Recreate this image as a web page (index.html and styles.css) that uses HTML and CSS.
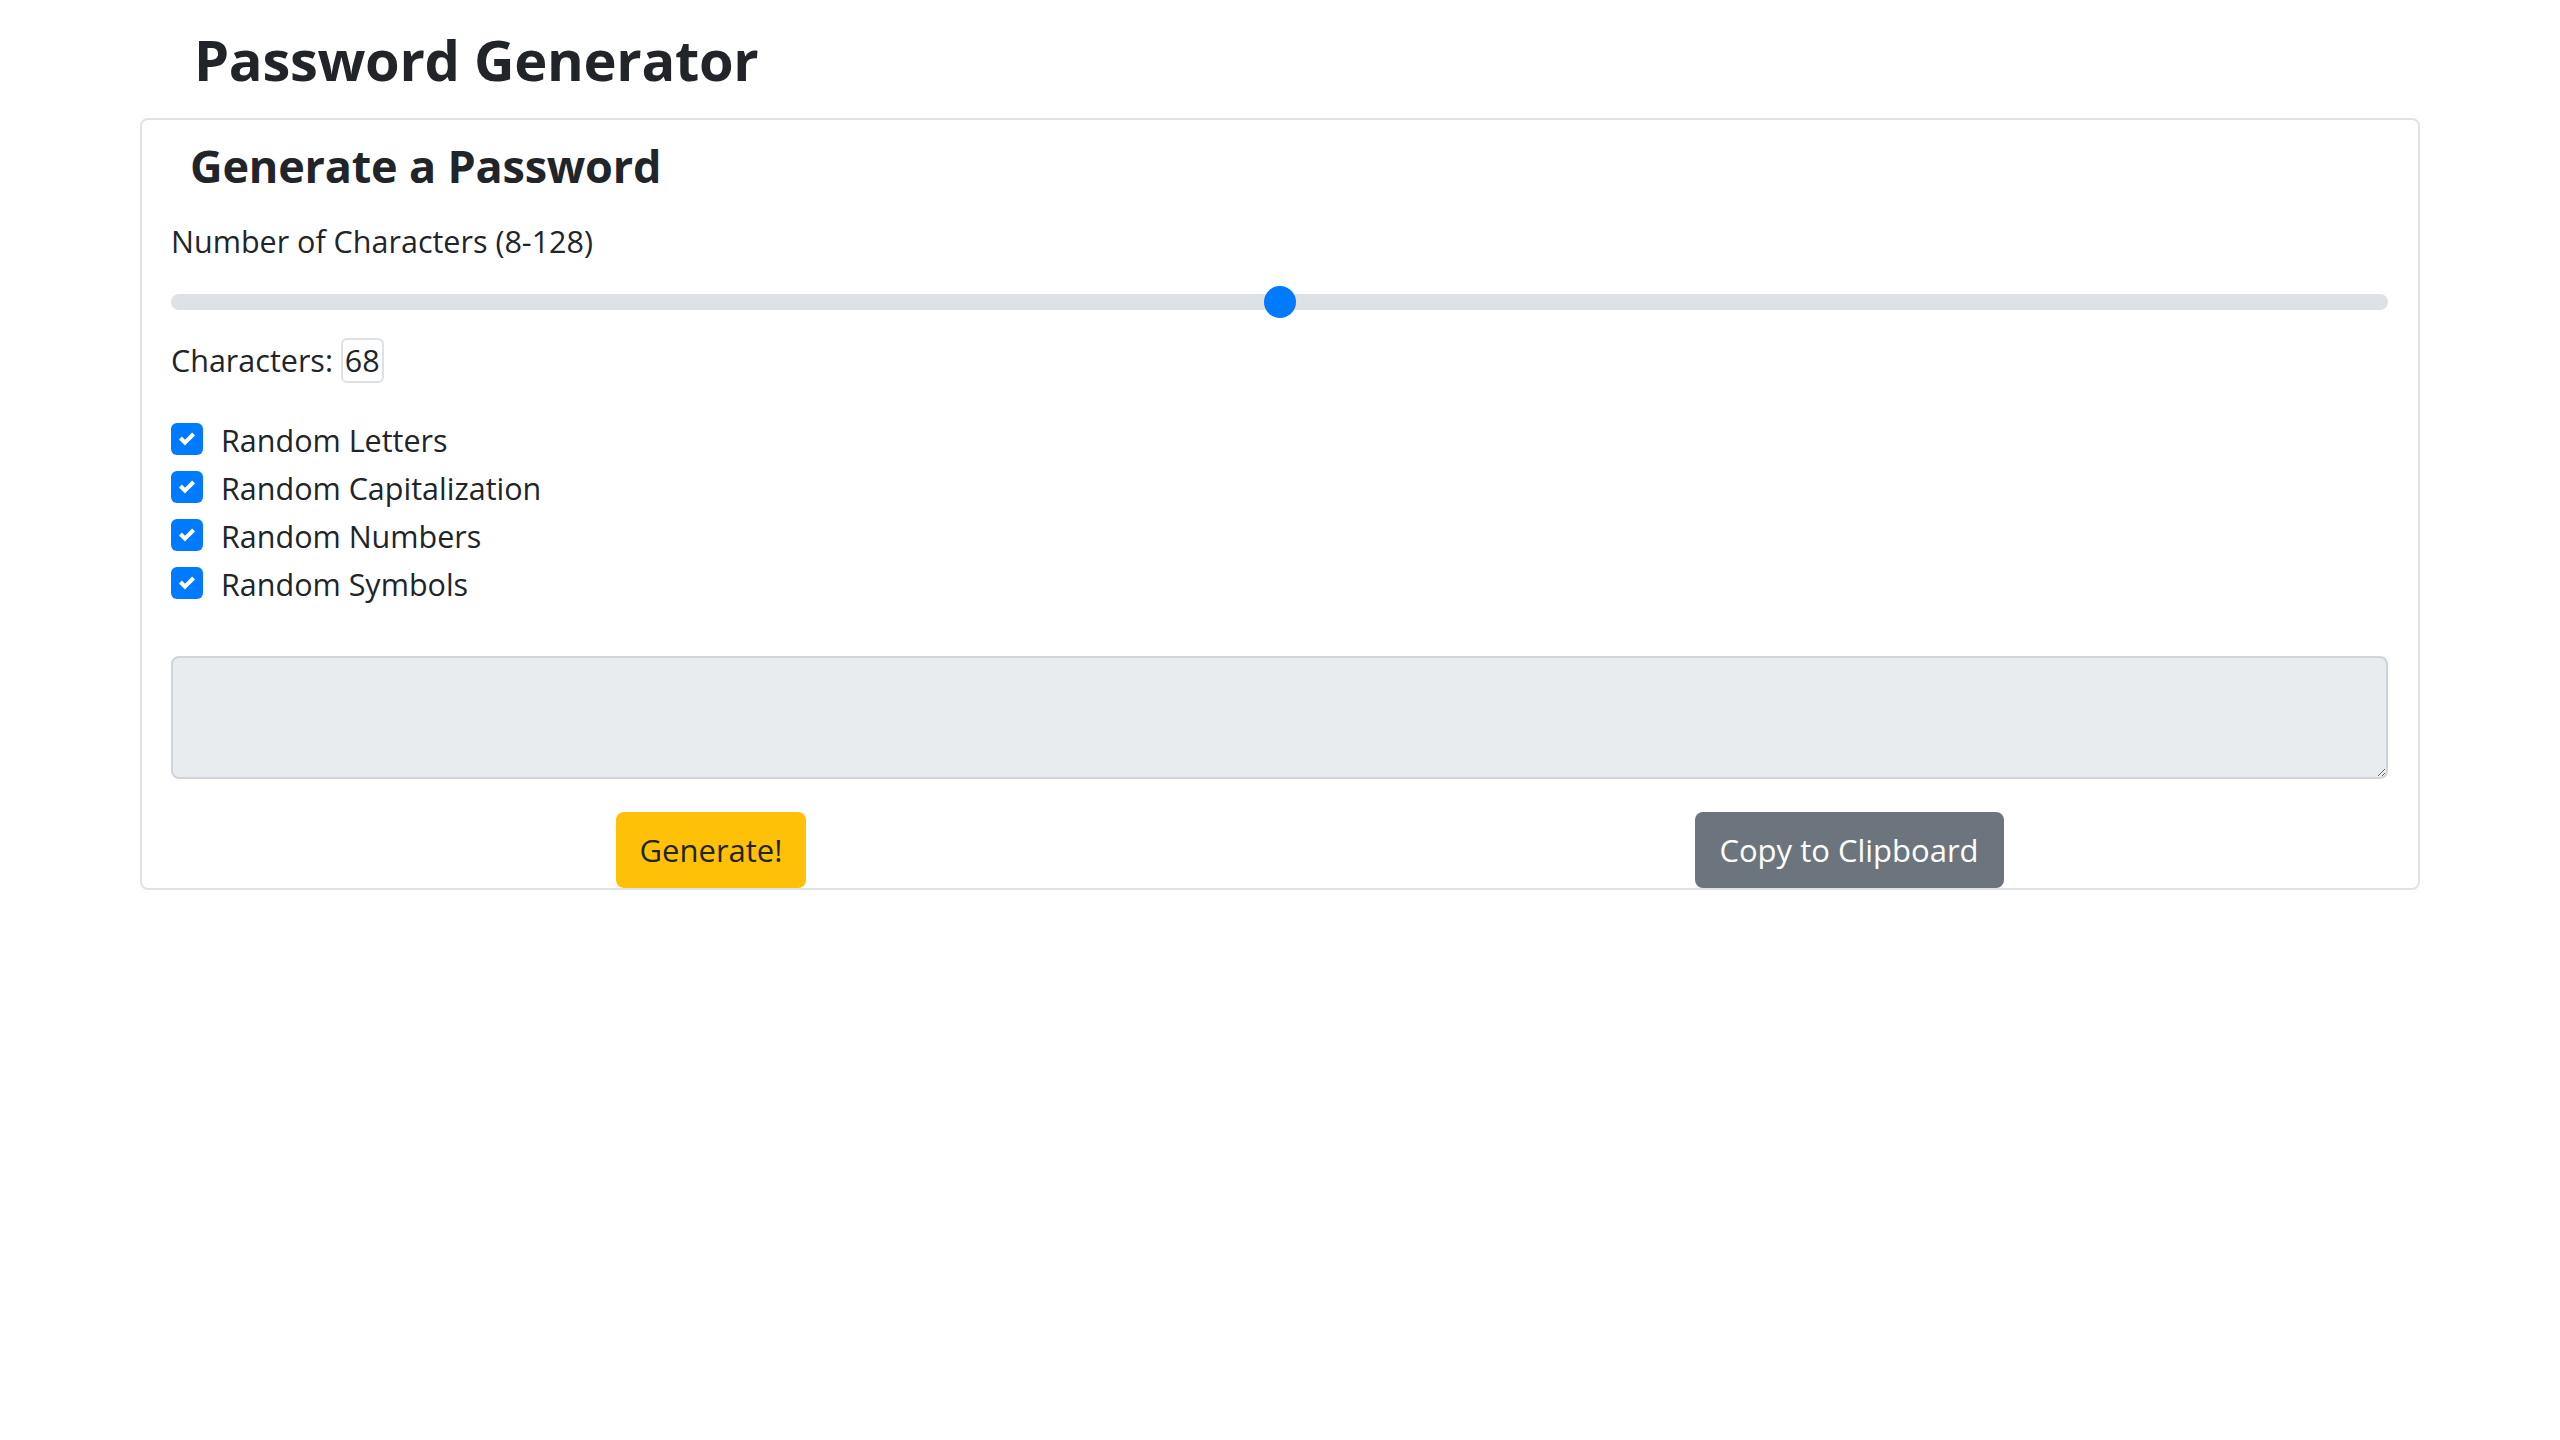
FILE: index.html
```html
<!DOCTYPE html>
<html lang="en">
<head>
<meta charset="utf-8">
<title>Password Generator</title>
<link rel="stylesheet" href="styles.css">
</head>
<body>
<div class="container">
  <h1 class="page-title">Password Generator</h1>
  <div class="card">
    <h2 class="card-title">Generate a Password</h2>
    <div class="card-body">
      <label class="field-label" for="length">Number of Characters (8-128)</label>
      <input class="range" type="range" id="length" min="8" max="128" value="68">
      <p class="count">Characters:&nbsp;<span class="badge">68</span></p>
      <ul class="options">
        <li class="option"><span class="check"><svg viewBox="0 0 8 8" width="16" height="16"><path fill="#fff" d="M6.564.75l-3.59 3.612-1.538-1.55L0 4.26 2.974 7.25 8 2.193z"/></svg></span>Random Letters</li>
        <li class="option"><span class="check"><svg viewBox="0 0 8 8" width="16" height="16"><path fill="#fff" d="M6.564.75l-3.59 3.612-1.538-1.55L0 4.26 2.974 7.25 8 2.193z"/></svg></span>Random Capitalization</li>
        <li class="option"><span class="check"><svg viewBox="0 0 8 8" width="16" height="16"><path fill="#fff" d="M6.564.75l-3.59 3.612-1.538-1.55L0 4.26 2.974 7.25 8 2.193z"/></svg></span>Random Numbers</li>
        <li class="option"><span class="check"><svg viewBox="0 0 8 8" width="16" height="16"><path fill="#fff" d="M6.564.75l-3.59 3.612-1.538-1.55L0 4.26 2.974 7.25 8 2.193z"/></svg></span>Random Symbols</li>
      </ul>
      <textarea class="output" readonly></textarea>
      <div class="actions">
        <div class="action-col"><button class="btn btn-warning" type="button">Generate!</button></div>
        <div class="action-col"><button class="btn btn-secondary" type="button">Copy to Clipboard</button></div>
      </div>
    </div>
  </div>
</div>
</body>
</html>
```
FILE: styles.css
```css
* { box-sizing: border-box; }

body {
  margin: 0;
  background: #fff;
  color: #212529;
  font-family: "Open Sans", "Noto Sans", sans-serif;
  font-size: 30.5px;
}

.container {
  width: 2280px;
  margin: 0 auto;
}

.page-title {
  margin: 0;
  padding-left: 54px;
  font-size: 56px;
  font-weight: 700;
  line-height: 118px;
  letter-spacing: -0.3px;
}

.card {
  border: 2px solid #dfe2e6;
  border-radius: 8px;
}

.card-title {
  margin: 0;
  padding-left: 48px;
  font-size: 45px;
  font-weight: 700;
  line-height: 92px;
  letter-spacing: -0.2px;
}

.card-body {
  padding: 0 30px 0 29px;
}

.field-label {
  display: block;
  margin-top: 5px;
  line-height: 48px;
}

.range {
  -webkit-appearance: none;
  appearance: none;
  display: block;
  width: 100%;
  height: 32px;
  margin: 21px 0 0;
  padding: 0;
  background: transparent;
}

.range::-webkit-slider-runnable-track {
  height: 16px;
  border-radius: 8px;
  background: #dee2e6;
}

.range::-webkit-slider-thumb {
  -webkit-appearance: none;
  appearance: none;
  width: 32px;
  height: 32px;
  margin-top: -8px;
  border: 0;
  border-radius: 50%;
  background: #007bff;
}

.count {
  display: flex;
  align-items: center;
  height: 48px;
  margin: 18px 0 0;
  line-height: 48px;
}

.badge {
  display: inline-block;
  height: 45px;
  padding: 0 2px;
  border: 2px solid #dee2e6;
  border-radius: 6px;
  line-height: 40px;
}

.options {
  list-style: none;
  margin: 32px 0 0;
  padding: 0;
}

.option {
  display: flex;
  align-items: center;
  gap: 18px;
  height: 48px;
  line-height: 46px;
}

.check {
  display: flex;
  align-items: center;
  justify-content: center;
  width: 32px;
  height: 32px;
  margin-top: -2px;
  border-radius: 6px;
  background: #007bff;
  flex: none;
}

.output {
  display: block;
  width: 100%;
  height: 123px;
  margin: 48px 0 0;
  border: 2px solid #ced4da;
  border-radius: 8px;
  background: #e9ecef;
  font: inherit;
}

.actions {
  display: flex;
  margin: 33px -30px 0 -29px;
}

.action-col {
  flex: 1;
  display: flex;
  justify-content: center;
}

.btn {
  height: 76px;
  border: 0;
  border-radius: 8px;
  font-family: inherit;
  font-size: 31px;
  padding: 0 20px;
}

.btn-warning {
  width: 190px;
  background: #ffc107;
  color: #212529;
}

.btn-secondary {
  width: 309px;
  background: #6c757d;
  color: #fff;
}
```
